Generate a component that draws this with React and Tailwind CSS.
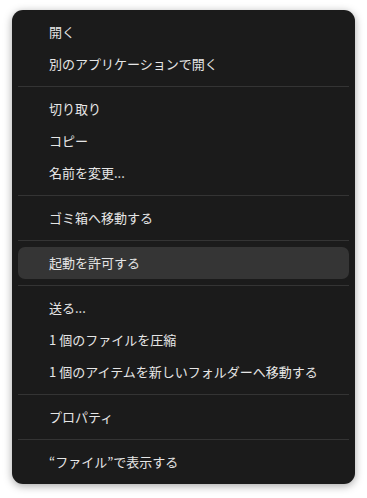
import React from 'react';

const groups = [
    ['開く', '別のアプリケーションで開く'],
    ['切り取り', 'コピー', '名前を変更...'],
    ['ゴミ箱へ移動する'],
    ['起動を許可する'],
    ['送る...', '1 個のファイルを圧縮', '1 個のアイテムを新しいフォルダーへ移動する'],
    ['プロパティ'],
    ['“ファイル”で表示する'],
];

const App = () => {
    return (
        <div
            className="w-[367px] h-[498px] bg-white pt-[10px] pl-[12px]"
            style={{ fontFamily: '"Noto Sans CJK JP", "Noto Sans", sans-serif' }}
        >
            <div className="w-[343px] bg-[#1b1b1b] rounded-[11px] py-[6px] px-[6px] shadow-[0_2px_8px_rgba(0,0,0,0.35)]">
                {groups.map((items, gi) => (
                    <div key={gi}>
                        {gi > 0 && <div className="h-px bg-[#343434] my-[6px]"></div>}
                        {items.map((label) => (
                            <div
                                key={label}
                                className={
                                    label === '起動を許可する'
                                        ? 'h-[32px] flex items-center pl-[31px] rounded-[7px] bg-[#353535] text-[13px] text-[#e6e6e6] whitespace-pre'
                                        : 'h-[32px] flex items-center pl-[31px] rounded-[7px] text-[13px] text-[#e6e6e6] whitespace-pre'
                                }
                            >
                                {label}
                            </div>
                        ))}
                    </div>
                ))}
            </div>
        </div>
    );
};

export default App;
